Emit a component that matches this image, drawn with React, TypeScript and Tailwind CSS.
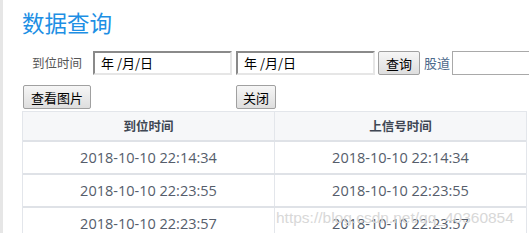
import React from "react"

const rows = [
  ["2018-10-10 22:14:34", "2018-10-10 22:14:34"],
  ["2018-10-10 22:23:55", "2018-10-10 22:23:55"],
  ["2018-10-10 22:23:57", "2018-10-10 22:23:57"],
]

const cjk = "font-['Microsoft_YaHei','Noto_Sans_CJK_SC',sans-serif]"

function DateInput({ className = "" }: { className?: string }) {
  return (
    <div
      className={`h-[24px] w-[139px] shrink-0 border-2 border-t-[#8a8a8a] border-l-[#8a8a8a] border-b-[#e6e6e6] border-r-[#e6e6e6] bg-white flex items-center pl-[6px] text-[13px] text-black whitespace-nowrap ${cjk} ${className}`}
    >
      年 /月/日
    </div>
  )
}

function Btn({ label, className = "" }: { label: string; className?: string }) {
  return (
    <button
      className={`h-[24px] shrink-0 px-[4px] rounded-[2px] border border-[#a0a0a0] bg-gradient-to-b from-[#f6f6f6] to-[#dedede] text-[13px] text-black leading-none whitespace-nowrap ${cjk} ${className}`}
    >
      {label}
    </button>
  )
}

export default function App() {
  return (
    <div className="relative flex w-[529px] h-[233px] overflow-hidden bg-white">
      {/* left strip */}
      <div className="w-[3px] shrink-0 bg-[#e6e6e6]" />

      <div className="flex-1 min-w-0 pl-[19px]">
        <div className="h-[45px] flex items-center">
          <h1 className={`text-[22.5px] text-[#1e8fe4] whitespace-nowrap ${cjk}`}>数据查询</h1>
        </div>

        {/* search row */}
        <div className="mt-[6px] flex items-center pl-[10px] whitespace-nowrap">
          <span className={`shrink-0 text-[12.5px] text-[#555] ${cjk}`}>到位时间</span>
          <DateInput className="ml-[11px]" />
          <DateInput className="ml-[4px]" />
          <Btn label="查询" className="ml-[3px] w-[42px]" />
          <span className={`shrink-0 ml-[4px] text-[13px] text-[#4d6a8c] ${cjk}`}>股道</span>
          <div className="ml-[2px] h-[24px] w-[90px] shrink-0 border border-[#a9a9a9] bg-white" />
        </div>

        {/* action row */}
        <div className="mt-[10px] flex items-center pl-[1px]">
          <Btn label="查看图片" className="w-[68px]" />
          <Btn label="关闭" className="ml-[145px] w-[40px]" />
        </div>

        {/* table */}
        <div className="mt-[2px] w-[505px] border-l border-t border-r border-[#e3e6eb] font-['Open_Sans','Noto_Sans_CJK_SC',sans-serif]">
          <div className="grid grid-cols-[252px_1fr] h-[30px] bg-[#f6f7f9] border-b-2 border-[#dfe2e7]">
            <div className={`flex items-center justify-center border-r border-[#e3e6eb] text-[12.5px] font-bold text-[#3f4754] ${cjk}`}>
              到位时间
            </div>
            <div className={`flex items-center justify-center text-[12.5px] font-bold text-[#3f4754] ${cjk}`}>
              上信号时间
            </div>
          </div>
          {rows.map((r, i) => (
            <div key={i} className="grid grid-cols-[252px_1fr] h-[33px] border-b-2 border-[#dfe2e7]">
              <div className="flex items-center justify-center border-r border-[#e3e6eb] text-[14.5px] text-[#555d6b] whitespace-nowrap">
                {r[0]}
              </div>
              <div className="flex items-center justify-center text-[14.5px] text-[#555d6b] whitespace-nowrap">{r[1]}</div>
            </div>
          ))}
        </div>
      </div>

      {/* watermark */}
      <div className="absolute left-[276px] top-[206px] text-[15.5px] text-[#d8d8d8] font-['Liberation_Sans',sans-serif] pointer-events-none whitespace-nowrap">
        https://blog.csdn.net/qq_40360854
      </div>
    </div>
  )
}
